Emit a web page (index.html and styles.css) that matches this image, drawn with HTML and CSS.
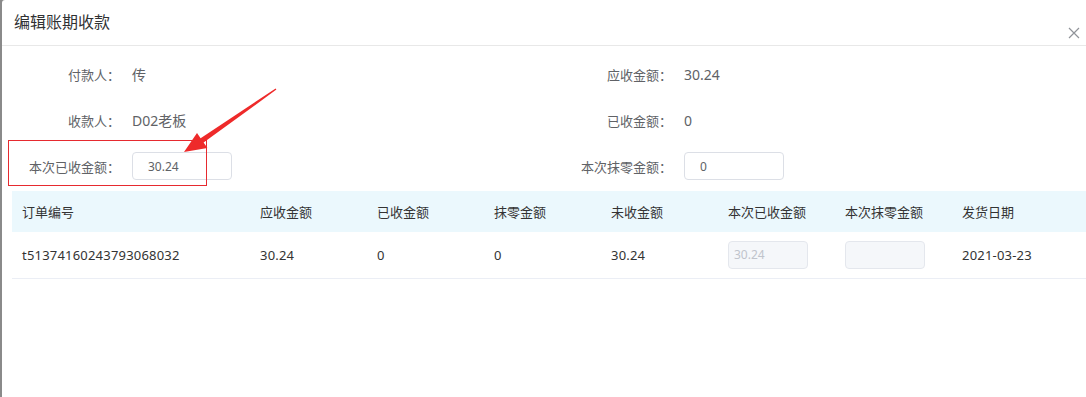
FILE: index.html
```html
<!DOCTYPE html>
<html lang="zh-CN">
  <head>
    <meta charset="UTF-8" />
    <title>编辑账期收款</title>
    <link rel="stylesheet" href="styles.css">
  </head>
  <body>
    <div class="dialog">
      <div class="dialog-header">
        <span class="dialog-title">编辑账期收款</span>
        <span class="dialog-close">
          <svg width="12" height="12" viewBox="0 0 12 12"><path d="M1 1 L11 11 M11 1 L1 11" stroke="#909399" stroke-width="1.2" fill="none"/></svg>
        </span>
      </div>
      <div class="dialog-body">
        <!-- 表单 -->
        <div class="form">
          <div class="form-item"><label>付款人：</label><span class="value">传</span></div>
          <div class="form-item"><label>应收金额：</label><span class="value">30.24</span></div>
          <div class="form-item"><label>收款人：</label><span class="value">D02老板</span></div>
          <div class="form-item"><label>已收金额：</label><span class="value">0</span></div>
          <div class="form-item"><label>本次已收金额：</label><input class="input" type="text" value="30.24" /></div>
          <div class="form-item"><label>本次抹零金额：</label><input class="input" type="text" value="0" /></div>
        </div>
        <!-- 表格 -->
        <table class="table">
          <colgroup>
            <col style="width:238px" />
            <col style="width:117px" />
            <col style="width:117px" />
            <col style="width:117px" />
            <col style="width:117px" />
            <col style="width:117px" />
            <col style="width:117px" />
            <col style="width:150px" />
          </colgroup>
          <thead>
            <tr>
              <th>订单编号</th>
              <th>应收金额</th>
              <th>已收金额</th>
              <th>抹零金额</th>
              <th>未收金额</th>
              <th>本次已收金额</th>
              <th>本次抹零金额</th>
              <th>发货日期</th>
            </tr>
          </thead>
          <tbody>
            <tr>
              <td>t51374160243793068032</td>
              <td>30.24</td>
              <td>0</td>
              <td>0</td>
              <td>30.24</td>
              <td><input class="input input-disabled" type="text" value="30.24" disabled /></td>
              <td><input class="input input-disabled" type="text" value="" disabled /></td>
              <td>2021-03-23</td>
            </tr>
          </tbody>
        </table>
      </div>
    </div>
    <!-- 标注 -->
    <div class="mark-box"></div>
    <svg class="mark-arrow" width="1086" height="397" viewBox="0 0 1086 397">
      <polygon points="275.6,88.4 276.4,89.6 203.6,142.6 207.4,148.0 184,152 197.0,133.0 200.6,138.2" fill="#ee2a2a"/>
    </svg>
  </body>
</html>
```

FILE: styles.css
```css
:root {
  --title-color: #303133;
  --label-color: #606266;
  --text-color: #333;
  --border-color: #ebeef5;
  --head-bg: #ebf8fd;
  --font-family: "Noto Sans", "Noto Sans CJK SC", sans-serif;
}
* {
  margin: 0;
  padding: 0;
  box-sizing: border-box;
}
body {
  width: 1086px;
  height: 397px;
  overflow: hidden;
  background-color: #8a8a8a;
  font-family: var(--font-family);
  color: var(--text-color);
  position: relative;
}
.dialog {
  margin-left: 2px;
  height: 397px;
  background-color: #fff;
  border-top-left-radius: 3px;
  overflow: hidden;
}
.dialog-header {
  height: 46px;
  padding: 0 6px 0 12px;
  border-bottom: 1px solid #e8e8e8;
  display: flex;
  align-items: center;
  justify-content: space-between;
}
.dialog-title {
  font-size: 16px;
  color: var(--title-color);
  line-height: 1;
  margin-top: -1px;
}
.dialog-close {
  align-self: flex-end;
  margin-bottom: 6px;
  display: flex;
}
.dialog-body {
  width: 1104px;
  padding: 8px 0 0 10px;
}
.form {
  display: grid;
  grid-template-columns: 552px 552px;
  row-gap: 6px;
  margin-bottom: 5px;
}
.form-item {
  display: flex;
  align-items: center;
  height: 40px;
  font-size: 14px;
}
.form-item label {
  width: 120px;
  padding-right: 12px;
  text-align: right;
  font-size: 13px;
  color: var(--label-color);
}
.form-item .value {
  color: var(--label-color);
}
.input {
  width: 100px;
  height: 28px;
  padding: 0 15px;
  border: 1px solid #dcdfe6;
  border-radius: 4px;
  font-family: var(--font-family);
  font-size: 12px;
  color: var(--label-color);
  background-color: #fff;
  outline: none;
}
.table {
  width: 1090px;
  border-collapse: collapse;
  table-layout: fixed;
  font-size: 13px;
}
.table th {
  height: 41px;
  padding: 0 10px;
  text-align: left;
  font-weight: normal;
  color: var(--text-color);
  background-color: var(--head-bg);
}
.table td {
  height: 46px;
  padding: 0 10px;
  color: var(--text-color);
  letter-spacing: 0.2px;
  border-bottom: 1px solid var(--border-color);
}
.input-disabled {
  width: 80px;
  padding: 0 5px;
  background-color: #f5f7fa;
  border-color: #e4e7ed;
  color: #c0c4cc;
}
.mark-box {
  position: absolute;
  left: 8px;
  top: 140px;
  width: 199px;
  height: 46px;
  border: 1px solid #e62a2f;
}
.mark-arrow {
  position: absolute;
  left: 0;
  top: 0;
  pointer-events: none;
}
```
